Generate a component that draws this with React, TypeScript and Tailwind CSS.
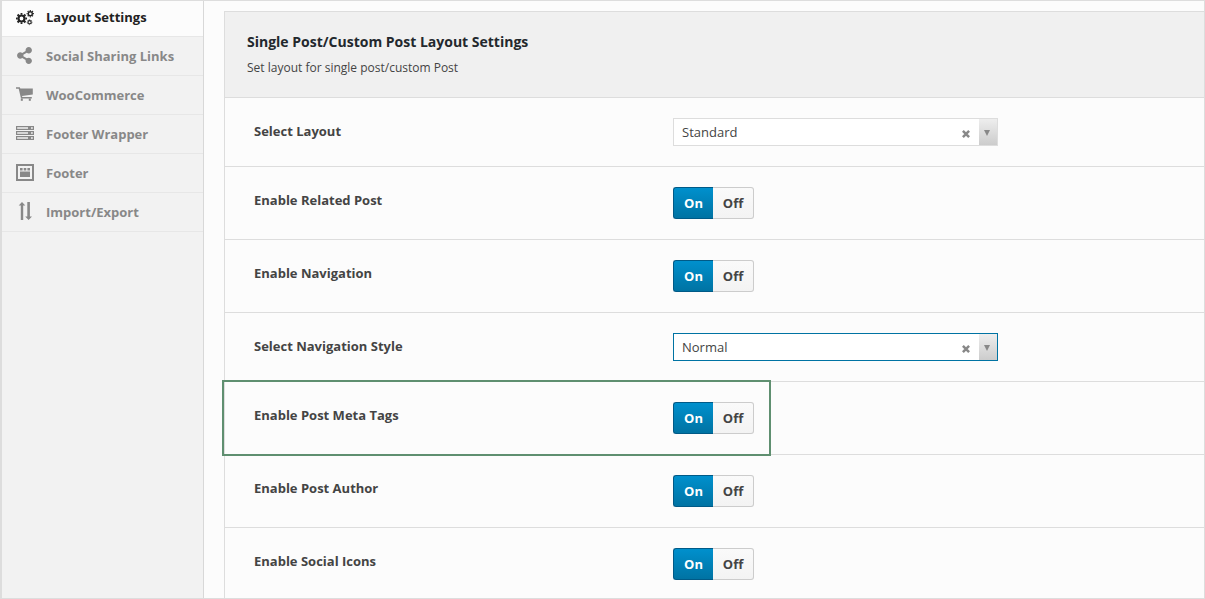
import { useId, useState, type ReactNode } from "react";
import { FaShareAlt } from "react-icons/fa";

function Gear({ cx, cy, ring, ringWidth, teeth, teethWidth }: { cx: number; cy: number; ring: number; ringWidth: number; teeth: number; teethWidth: number }) {
  return (
    <g fill="none" stroke="currentColor">
      <circle cx={cx} cy={cy} r={ring} strokeWidth={ringWidth} />
      <circle cx={cx} cy={cy} r={teeth} strokeWidth={teethWidth} pathLength={16} strokeDasharray="1 1" strokeDashoffset={0.5} />
    </g>
  );
}

function GearsIcon() {
  return (
    <svg width="18" height="18" viewBox="0 0 18 18" aria-hidden="true">
      <Gear cx={5.5} cy={10.5} ring={3} ringWidth={2.2} teeth={4.7} teethWidth={1.7} />
      <Gear cx={14.3} cy={5.7} ring={2} ringWidth={1.4} teeth={3.1} teethWidth={1.2} />
      <Gear cx={13.6} cy={14.2} ring={1.6} ringWidth={1.1} teeth={2.4} teethWidth={0.9} />
    </svg>
  );
}

function CartIcon() {
  return (
    <svg width="18" height="14" viewBox="0 0 18 14" fill="currentColor" aria-hidden="true">
      <path d="M0 .3h3.800l.5 1.200H16.800V7.600L6 8.900l.3 1.100h9.500v1.500H5L2.700 1.700H0z" />
      <rect x="4.800" y="11.500" width="2" height="2.300" />
      <rect x="12.800" y="11.500" width="2" height="2.300" />
    </svg>
  );
}

function LinesIcon() {
  return (
    <svg width="18" height="14" viewBox="0 0 18 14" fill="none" stroke="currentColor" strokeWidth="1.200" aria-hidden="true">
      <path d="M.6.600h16.800v2.800H.6zM.6 5.600h16.800v2.800H.6zM.6 10.600h16.800v2.800H.6z" />
      <path d="M12 2h3M12 7h3M12 12h3" strokeWidth="3" />
    </svg>
  );
}

function WebsiteIcon() {
  return (
    <svg width="18" height="17" viewBox="0 0 18 17" fill="currentColor" aria-hidden="true">
      <path fillRule="evenodd" d="M0 0h18v17H0zM2 2v13h14V2z" />
      <path d="M4 4h2.600v2.500H4zM7.700 4h2.600v2.500H7.700zM11.400 4H14v2.500h-2.600zM4 7.500h10V13H4z" />
    </svg>
  );
}

function ArrowsIcon() {
  return (
    <svg width="18" height="18" viewBox="0 0 18 18" fill="currentColor" aria-hidden="true">
      <path d="M6 0 9.300 3.500H7.200V18H4.800V3.500H2.700zM11.300 0h2.600v14.500H16L12.600 18 9.200 14.500h2.100z" />
    </svg>
  );
}

const menu: { label: string; icon: ReactNode }[] = [
  { label: "Layout Settings", icon: <GearsIcon /> },
  { label: "Social Sharing Links", icon: <FaShareAlt size={17} /> },
  { label: "WooCommerce", icon: <CartIcon /> },
  { label: "Footer Wrapper", icon: <LinesIcon /> },
  { label: "Footer", icon: <WebsiteIcon /> },
  { label: "Import/Export", icon: <ArrowsIcon /> },
];

function Sidebar() {
  return (
    <nav className="w-[202px] shrink-0 border-r border-[#d8d8d8] bg-[#f2f2f2]">
      <ul>
        {menu.map((item, i) => (
          <li key={item.label} className="border-b border-[#e7e7e7]">
            <a
              href="#"
              aria-current={i === 0 ? "page" : undefined}
              className={
                i === 0
                  ? "flex h-[35px] items-center gap-3 bg-[#fcfcfc] pb-1 pl-3.5 text-[#222]"
                  : "flex h-[38px] items-center gap-3 pl-3.5 text-[#888]"
              }
            >
              <span className={i === 0 ? "flex w-[18px] shrink-0 items-center" : "flex w-[18px] shrink-0 items-center pb-0.5"}>
                {item.icon}
              </span>
              <span className="font-bold">{item.label}</span>
            </a>
          </li>
        ))}
      </ul>
    </nav>
  );
}

function Toggle({ name, label }: { name: string; label: string }) {
  const [on, setOn] = useState(true);
  const active =
    "flex h-8 w-10 items-center justify-center border border-[#005a87] bg-linear-to-b from-[#0090cd] to-[#0073a3] font-bold text-white";
  const idle =
    "flex h-8 w-[41px] items-center justify-center border border-[#ccc] bg-linear-to-b from-[#fafafa] to-[#f3f3f3] font-bold text-[#444]";
  return (
    <div role="radiogroup" aria-label={label} className="relative flex">
      <label className={(on ? active : idle) + " rounded-l-[3px] border-r-0"}>
        <input type="radio" name={name} checked={on} onChange={() => setOn(true)} className="sr-only" />
        On
      </label>
      <label className={(on ? idle : active) + " rounded-r-[3px] border-l-0"}>
        <input type="radio" name={name} checked={!on} onChange={() => setOn(false)} className="sr-only" />
        Off
      </label>
    </div>
  );
}

function Dropdown({ id, value, options, focused }: { id: string; value: string; options: string[]; focused?: boolean }) {
  const [selected, setSelected] = useState(value);
  return (
    <div
      className={
        focused
          ? "relative h-7 w-full max-w-[325px] border border-[#0073a3] bg-white"
          : "relative h-7 w-full max-w-[325px] border border-[#ddd] bg-white"
      }
    >
      <select
        id={id}
        value={selected}
        onChange={(e) => setSelected(e.target.value)}
        className="block h-full w-full appearance-none bg-transparent pl-2 text-[#444] outline-none"
      >
        <option value="" />
        {options.map((o) => (
          <option key={o}>{o}</option>
        ))}
      </select>
      <button
        type="button"
        aria-label="Clear"
        onClick={() => setSelected("")}
        className="absolute top-[11px] right-[27px] text-[#888]"
      >
        <svg width="8" height="8" viewBox="0 0 8 8" stroke="currentColor" strokeWidth="2.500" aria-hidden="true">
          <path d="M.9.900l6.200 6.200M7.100.900.900 7.100" />
        </svg>
      </button>
      <span className="pointer-events-none absolute inset-y-0 right-0 flex w-[18px] items-center justify-center bg-linear-to-b from-[#eee] to-[#ccc] pt-0.5 pr-0.5 text-[#888]">
        <svg width="6" height="6" viewBox="0 0 6 6" fill="currentColor" aria-hidden="true">
          <path d="M0 0h6L3 6z" />
        </svg>
      </span>
    </div>
  );
}

type Field = { label: string; options?: string[]; focused?: boolean; marked?: boolean };

const fields: Field[] = [
  { label: "Select Layout", options: ["Standard", "Full Width"] },
  { label: "Enable Related Post" },
  { label: "Enable Navigation" },
  { label: "Select Navigation Style", options: ["Normal", "Sticky"], focused: true },
  { label: "Enable Post Meta Tags", marked: true },
  { label: "Enable Post Author" },
  { label: "Enable Social Icons" },
];

function FieldRow({ field }: { field: Field }) {
  const id = useId();
  return (
    <div className="relative grid grid-cols-[419px_1fr] border-b border-[#ddd] py-5 pl-[29px]">
      {field.options ? (
        <label htmlFor={id} className="pt-1 font-bold text-[#444]">
          {field.label}
        </label>
      ) : (
        <span className="pt-1 font-bold text-[#444]">{field.label}</span>
      )}
      {field.options ? (
        <Dropdown id={id} value={field.options[0]} options={field.options} focused={field.focused} />
      ) : (
        <Toggle name={id} label={field.label} />
      )}
      {field.marked && (
        <div className="pointer-events-none absolute -top-0.5 -bottom-0.5 -left-[3px] z-10 w-[549px] border-2 border-[#5f8f70]" />
      )}
    </div>
  );
}

export default function App() {
  return (
    <div className="flex h-screen overflow-hidden border border-l-2 border-[#ddd] bg-[#fcfcfc] font-['Open_Sans',sans-serif] text-[13px] leading-[18px]">
      <Sidebar />
      <main className="min-w-0 flex-1 pt-2.5 pl-5">
        <section className="border-t border-l border-[#ddd]">
          <header className="border-b border-[#ddd] bg-[#f0f0f0] px-[22px] py-5">
            <h1 className="text-sm leading-5 font-bold text-[#23282d]">Single Post/Custom Post Layout Settings</h1>
            <p className="pt-[7px] text-xs leading-[18px] text-[#444]">Set layout for single post/custom Post</p>
          </header>
          {fields.map((f) => (
            <FieldRow key={f.label} field={f} />
          ))}
        </section>
      </main>
    </div>
  );
}
